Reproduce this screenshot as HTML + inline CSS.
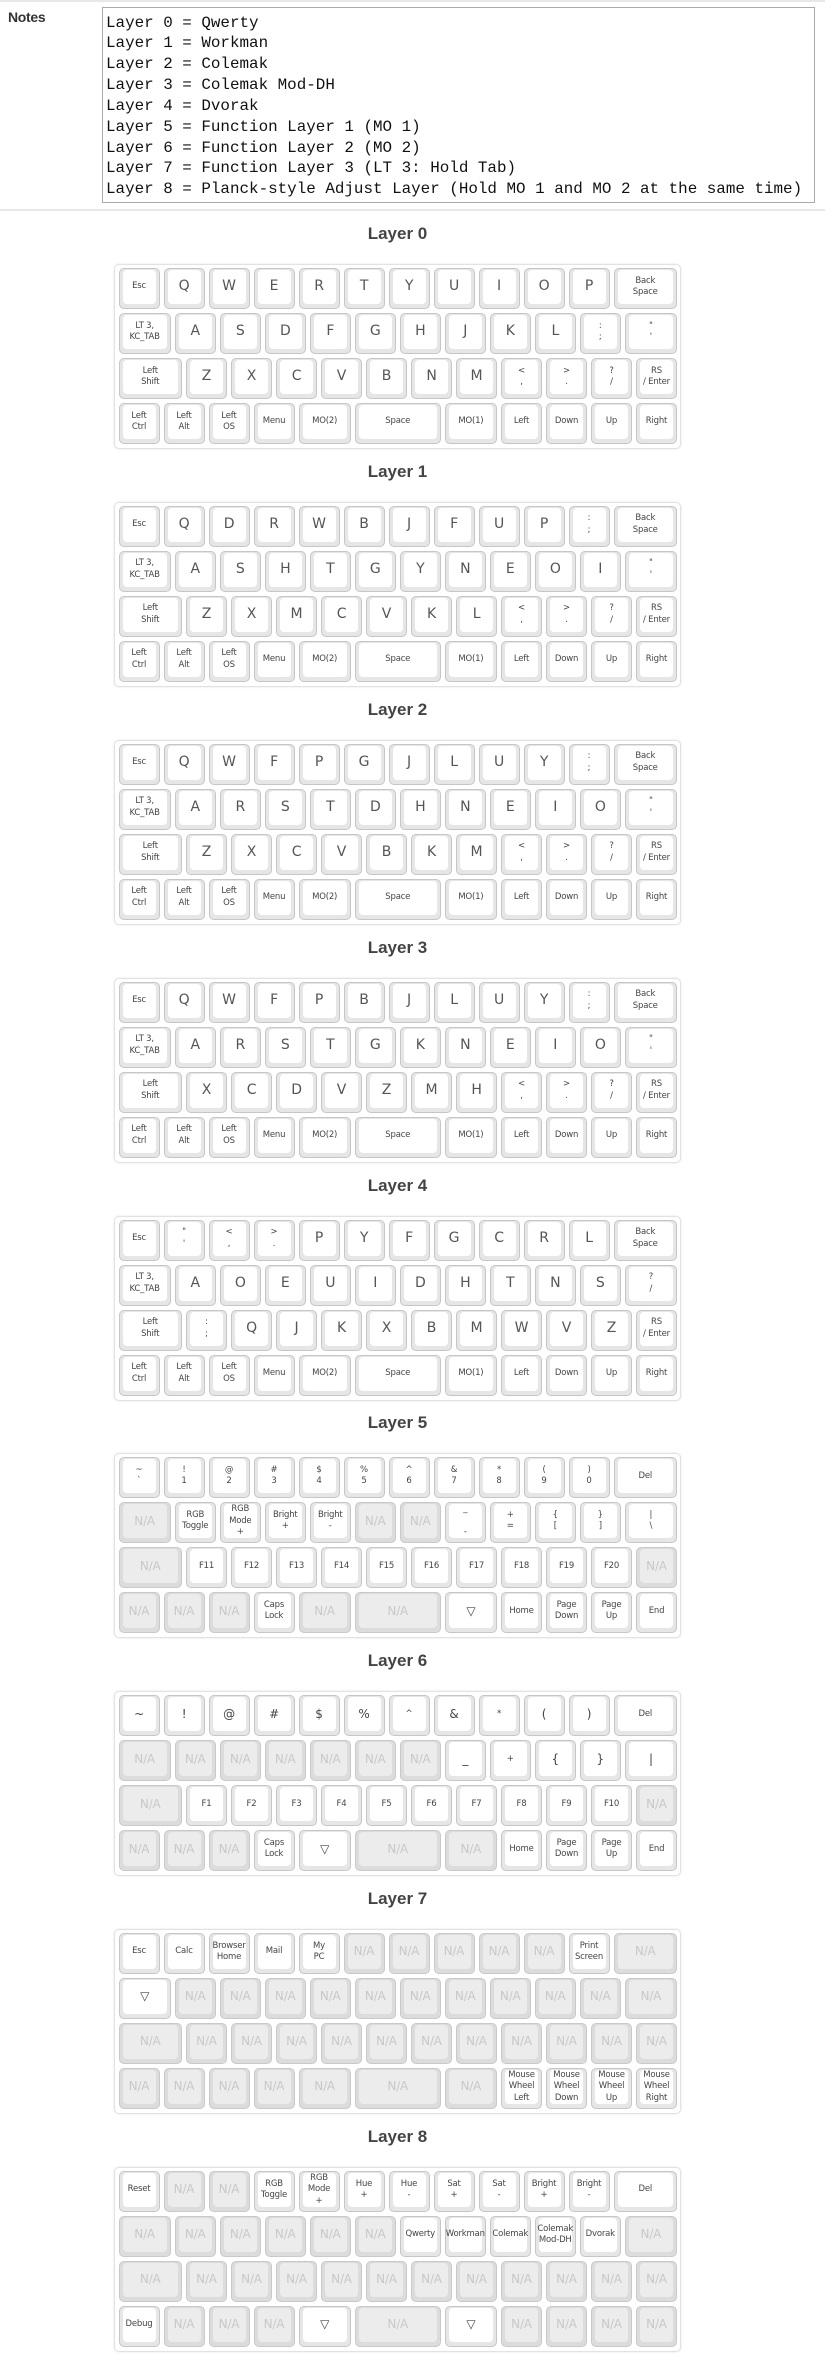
<!DOCTYPE html>
<html><head><meta charset="utf-8"><style>
*{box-sizing:border-box;margin:0;padding:0}
body{width:825px;height:2375px;background:#fff;font-family:"DejaVu Sans","Liberation Sans",sans-serif;position:relative;overflow:hidden;color:#444}
.top{position:absolute;left:0;top:0;width:825px;height:2px;background:#e8e8e8}
.sep{position:absolute;left:0;top:209px;width:825px;height:2px;background:#e8e8e8}
.nl{position:absolute;left:8px;top:9px;font-family:"Liberation Sans",sans-serif;font-weight:bold;font-size:14px;color:#333;letter-spacing:-0.3px}
.ta{position:absolute;left:102px;top:7px;width:713px;height:196px;border:1px solid #aaa;overflow:hidden}
.ta pre{position:absolute;left:3px;top:4.5px;font-family:"Liberation Mono",monospace;font-size:15.9px;line-height:20.85px;color:#111}
.sec{position:absolute;left:0;width:825px;height:238px}
.t{position:absolute;left:114px;width:567px;top:12px;text-align:center;font-family:"Liberation Sans",sans-serif;font-weight:bold;font-size:17px;color:#444}
.kb{position:absolute;left:114px;top:52px;width:567px;height:185px;border:1px solid #e2e2e2;border-radius:5px;box-shadow:0 0 2px rgba(0,0,0,.12);padding:3px 0 0 3.5px}
.r{display:flex;gap:4px;height:41px;margin-bottom:4px}
.k{position:relative;width:41px;height:41px;flex:none;background:#e6e6e6;border:1px solid #c6c6c6;border-radius:5px}
.k span{position:absolute;left:3px;right:3px;top:1px;bottom:4px;background:#fff;border-radius:4px;display:flex;align-items:center;justify-content:center;text-align:center;font-size:8.5px;line-height:11.5px;color:#444;white-space:nowrap;letter-spacing:-0.2px}
.k span.b{font-size:14px;color:#555}
.k span.m{font-size:12px}
.n{background:#dcdcdc;border-color:#c9c9c9}
.n span{background:#ececec;color:#c8c8c8;font-size:12px}
.a{width:52.25px}.c{width:63.5px}.d{width:86px}
</style></head><body>
<div class="top"></div>
<div class="nl">Notes</div>
<div class="ta"><pre>Layer 0 = Qwerty
Layer 1 = Workman
Layer 2 = Colemak
Layer 3 = Colemak Mod-DH
Layer 4 = Dvorak
Layer 5 = Function Layer 1 (MO 1)
Layer 6 = Function Layer 2 (MO 2)
Layer 7 = Function Layer 3 (LT 3: Hold Tab)
Layer 8 = Planck-style Adjust Layer (Hold MO 1 and MO 2 at the same time)</pre></div>
<div class="sep"></div>

<div class="sec" style="top:212px"><div class="t">Layer 0</div><div class="kb">
<div class="r"><div class="k"><span>Esc</span></div><div class="k"><span class="b">Q</span></div><div class="k"><span class="b">W</span></div><div class="k"><span class="b">E</span></div><div class="k"><span class="b">R</span></div><div class="k"><span class="b">T</span></div><div class="k"><span class="b">Y</span></div><div class="k"><span class="b">U</span></div><div class="k"><span class="b">I</span></div><div class="k"><span class="b">O</span></div><div class="k"><span class="b">P</span></div><div class="k c"><span>Back<br>Space</span></div></div>
<div class="r"><div class="k a"><span>LT 3,<br>KC_TAB</span></div><div class="k"><span class="b">A</span></div><div class="k"><span class="b">S</span></div><div class="k"><span class="b">D</span></div><div class="k"><span class="b">F</span></div><div class="k"><span class="b">G</span></div><div class="k"><span class="b">H</span></div><div class="k"><span class="b">J</span></div><div class="k"><span class="b">K</span></div><div class="k"><span class="b">L</span></div><div class="k"><span>:<br>;</span></div><div class="k a"><span>"<br>'</span></div></div>
<div class="r"><div class="k c"><span>Left<br>Shift</span></div><div class="k"><span class="b">Z</span></div><div class="k"><span class="b">X</span></div><div class="k"><span class="b">C</span></div><div class="k"><span class="b">V</span></div><div class="k"><span class="b">B</span></div><div class="k"><span class="b">N</span></div><div class="k"><span class="b">M</span></div><div class="k"><span>&lt;<br>,</span></div><div class="k"><span>&gt;<br>.</span></div><div class="k"><span>?<br>/</span></div><div class="k"><span>RS<br>/ Enter</span></div></div>
<div class="r"><div class="k"><span>Left<br>Ctrl</span></div><div class="k"><span>Left<br>Alt</span></div><div class="k"><span>Left<br>OS</span></div><div class="k"><span>Menu</span></div><div class="k a"><span>MO(2)</span></div><div class="k d"><span>Space</span></div><div class="k a"><span>MO(1)</span></div><div class="k"><span>Left</span></div><div class="k"><span>Down</span></div><div class="k"><span>Up</span></div><div class="k"><span>Right</span></div></div>
</div></div>

<div class="sec" style="top:449.9px"><div class="t">Layer 1</div><div class="kb">
<div class="r"><div class="k"><span>Esc</span></div><div class="k"><span class="b">Q</span></div><div class="k"><span class="b">D</span></div><div class="k"><span class="b">R</span></div><div class="k"><span class="b">W</span></div><div class="k"><span class="b">B</span></div><div class="k"><span class="b">J</span></div><div class="k"><span class="b">F</span></div><div class="k"><span class="b">U</span></div><div class="k"><span class="b">P</span></div><div class="k"><span>:<br>;</span></div><div class="k c"><span>Back<br>Space</span></div></div>
<div class="r"><div class="k a"><span>LT 3,<br>KC_TAB</span></div><div class="k"><span class="b">A</span></div><div class="k"><span class="b">S</span></div><div class="k"><span class="b">H</span></div><div class="k"><span class="b">T</span></div><div class="k"><span class="b">G</span></div><div class="k"><span class="b">Y</span></div><div class="k"><span class="b">N</span></div><div class="k"><span class="b">E</span></div><div class="k"><span class="b">O</span></div><div class="k"><span class="b">I</span></div><div class="k a"><span>"<br>'</span></div></div>
<div class="r"><div class="k c"><span>Left<br>Shift</span></div><div class="k"><span class="b">Z</span></div><div class="k"><span class="b">X</span></div><div class="k"><span class="b">M</span></div><div class="k"><span class="b">C</span></div><div class="k"><span class="b">V</span></div><div class="k"><span class="b">K</span></div><div class="k"><span class="b">L</span></div><div class="k"><span>&lt;<br>,</span></div><div class="k"><span>&gt;<br>.</span></div><div class="k"><span>?<br>/</span></div><div class="k"><span>RS<br>/ Enter</span></div></div>
<div class="r"><div class="k"><span>Left<br>Ctrl</span></div><div class="k"><span>Left<br>Alt</span></div><div class="k"><span>Left<br>OS</span></div><div class="k"><span>Menu</span></div><div class="k a"><span>MO(2)</span></div><div class="k d"><span>Space</span></div><div class="k a"><span>MO(1)</span></div><div class="k"><span>Left</span></div><div class="k"><span>Down</span></div><div class="k"><span>Up</span></div><div class="k"><span>Right</span></div></div>
</div></div>

<div class="sec" style="top:687.75px"><div class="t">Layer 2</div><div class="kb">
<div class="r"><div class="k"><span>Esc</span></div><div class="k"><span class="b">Q</span></div><div class="k"><span class="b">W</span></div><div class="k"><span class="b">F</span></div><div class="k"><span class="b">P</span></div><div class="k"><span class="b">G</span></div><div class="k"><span class="b">J</span></div><div class="k"><span class="b">L</span></div><div class="k"><span class="b">U</span></div><div class="k"><span class="b">Y</span></div><div class="k"><span>:<br>;</span></div><div class="k c"><span>Back<br>Space</span></div></div>
<div class="r"><div class="k a"><span>LT 3,<br>KC_TAB</span></div><div class="k"><span class="b">A</span></div><div class="k"><span class="b">R</span></div><div class="k"><span class="b">S</span></div><div class="k"><span class="b">T</span></div><div class="k"><span class="b">D</span></div><div class="k"><span class="b">H</span></div><div class="k"><span class="b">N</span></div><div class="k"><span class="b">E</span></div><div class="k"><span class="b">I</span></div><div class="k"><span class="b">O</span></div><div class="k a"><span>"<br>'</span></div></div>
<div class="r"><div class="k c"><span>Left<br>Shift</span></div><div class="k"><span class="b">Z</span></div><div class="k"><span class="b">X</span></div><div class="k"><span class="b">C</span></div><div class="k"><span class="b">V</span></div><div class="k"><span class="b">B</span></div><div class="k"><span class="b">K</span></div><div class="k"><span class="b">M</span></div><div class="k"><span>&lt;<br>,</span></div><div class="k"><span>&gt;<br>.</span></div><div class="k"><span>?<br>/</span></div><div class="k"><span>RS<br>/ Enter</span></div></div>
<div class="r"><div class="k"><span>Left<br>Ctrl</span></div><div class="k"><span>Left<br>Alt</span></div><div class="k"><span>Left<br>OS</span></div><div class="k"><span>Menu</span></div><div class="k a"><span>MO(2)</span></div><div class="k d"><span>Space</span></div><div class="k a"><span>MO(1)</span></div><div class="k"><span>Left</span></div><div class="k"><span>Down</span></div><div class="k"><span>Up</span></div><div class="k"><span>Right</span></div></div>
</div></div>

<div class="sec" style="top:925.6px"><div class="t">Layer 3</div><div class="kb">
<div class="r"><div class="k"><span>Esc</span></div><div class="k"><span class="b">Q</span></div><div class="k"><span class="b">W</span></div><div class="k"><span class="b">F</span></div><div class="k"><span class="b">P</span></div><div class="k"><span class="b">B</span></div><div class="k"><span class="b">J</span></div><div class="k"><span class="b">L</span></div><div class="k"><span class="b">U</span></div><div class="k"><span class="b">Y</span></div><div class="k"><span>:<br>;</span></div><div class="k c"><span>Back<br>Space</span></div></div>
<div class="r"><div class="k a"><span>LT 3,<br>KC_TAB</span></div><div class="k"><span class="b">A</span></div><div class="k"><span class="b">R</span></div><div class="k"><span class="b">S</span></div><div class="k"><span class="b">T</span></div><div class="k"><span class="b">G</span></div><div class="k"><span class="b">K</span></div><div class="k"><span class="b">N</span></div><div class="k"><span class="b">E</span></div><div class="k"><span class="b">I</span></div><div class="k"><span class="b">O</span></div><div class="k a"><span>"<br>'</span></div></div>
<div class="r"><div class="k c"><span>Left<br>Shift</span></div><div class="k"><span class="b">X</span></div><div class="k"><span class="b">C</span></div><div class="k"><span class="b">D</span></div><div class="k"><span class="b">V</span></div><div class="k"><span class="b">Z</span></div><div class="k"><span class="b">M</span></div><div class="k"><span class="b">H</span></div><div class="k"><span>&lt;<br>,</span></div><div class="k"><span>&gt;<br>.</span></div><div class="k"><span>?<br>/</span></div><div class="k"><span>RS<br>/ Enter</span></div></div>
<div class="r"><div class="k"><span>Left<br>Ctrl</span></div><div class="k"><span>Left<br>Alt</span></div><div class="k"><span>Left<br>OS</span></div><div class="k"><span>Menu</span></div><div class="k a"><span>MO(2)</span></div><div class="k d"><span>Space</span></div><div class="k a"><span>MO(1)</span></div><div class="k"><span>Left</span></div><div class="k"><span>Down</span></div><div class="k"><span>Up</span></div><div class="k"><span>Right</span></div></div>
</div></div>

<div class="sec" style="top:1163.5px"><div class="t">Layer 4</div><div class="kb">
<div class="r"><div class="k"><span>Esc</span></div><div class="k"><span>"<br>'</span></div><div class="k"><span>&lt;<br>,</span></div><div class="k"><span>&gt;<br>.</span></div><div class="k"><span class="b">P</span></div><div class="k"><span class="b">Y</span></div><div class="k"><span class="b">F</span></div><div class="k"><span class="b">G</span></div><div class="k"><span class="b">C</span></div><div class="k"><span class="b">R</span></div><div class="k"><span class="b">L</span></div><div class="k c"><span>Back<br>Space</span></div></div>
<div class="r"><div class="k a"><span>LT 3,<br>KC_TAB</span></div><div class="k"><span class="b">A</span></div><div class="k"><span class="b">O</span></div><div class="k"><span class="b">E</span></div><div class="k"><span class="b">U</span></div><div class="k"><span class="b">I</span></div><div class="k"><span class="b">D</span></div><div class="k"><span class="b">H</span></div><div class="k"><span class="b">T</span></div><div class="k"><span class="b">N</span></div><div class="k"><span class="b">S</span></div><div class="k a"><span>?<br>/</span></div></div>
<div class="r"><div class="k c"><span>Left<br>Shift</span></div><div class="k"><span>:<br>;</span></div><div class="k"><span class="b">Q</span></div><div class="k"><span class="b">J</span></div><div class="k"><span class="b">K</span></div><div class="k"><span class="b">X</span></div><div class="k"><span class="b">B</span></div><div class="k"><span class="b">M</span></div><div class="k"><span class="b">W</span></div><div class="k"><span class="b">V</span></div><div class="k"><span class="b">Z</span></div><div class="k"><span>RS<br>/ Enter</span></div></div>
<div class="r"><div class="k"><span>Left<br>Ctrl</span></div><div class="k"><span>Left<br>Alt</span></div><div class="k"><span>Left<br>OS</span></div><div class="k"><span>Menu</span></div><div class="k a"><span>MO(2)</span></div><div class="k d"><span>Space</span></div><div class="k a"><span>MO(1)</span></div><div class="k"><span>Left</span></div><div class="k"><span>Down</span></div><div class="k"><span>Up</span></div><div class="k"><span>Right</span></div></div>
</div></div>

<div class="sec" style="top:1401.4px"><div class="t">Layer 5</div><div class="kb">
<div class="r"><div class="k"><span>~<br>`</span></div><div class="k"><span>!<br>1</span></div><div class="k"><span>@<br>2</span></div><div class="k"><span>#<br>3</span></div><div class="k"><span>$<br>4</span></div><div class="k"><span>%<br>5</span></div><div class="k"><span>^<br>6</span></div><div class="k"><span>&amp;<br>7</span></div><div class="k"><span>*<br>8</span></div><div class="k"><span>(<br>9</span></div><div class="k"><span>)<br>0</span></div><div class="k c"><span>Del</span></div></div>
<div class="r"><div class="k a n"><span>N/A</span></div><div class="k"><span>RGB<br>Toggle</span></div><div class="k"><span>RGB<br>Mode<br>+</span></div><div class="k"><span>Bright<br>+</span></div><div class="k"><span>Bright<br>-</span></div><div class="k n"><span>N/A</span></div><div class="k n"><span>N/A</span></div><div class="k"><span>_<br><br>-</span></div><div class="k"><span>+<br>=</span></div><div class="k"><span>{<br>[</span></div><div class="k"><span>}<br>]</span></div><div class="k a"><span>|<br>\</span></div></div>
<div class="r"><div class="k c n"><span>N/A</span></div><div class="k"><span>F11</span></div><div class="k"><span>F12</span></div><div class="k"><span>F13</span></div><div class="k"><span>F14</span></div><div class="k"><span>F15</span></div><div class="k"><span>F16</span></div><div class="k"><span>F17</span></div><div class="k"><span>F18</span></div><div class="k"><span>F19</span></div><div class="k"><span>F20</span></div><div class="k n"><span>N/A</span></div></div>
<div class="r"><div class="k n"><span>N/A</span></div><div class="k n"><span>N/A</span></div><div class="k n"><span>N/A</span></div><div class="k"><span>Caps<br>Lock</span></div><div class="k a n"><span>N/A</span></div><div class="k d n"><span>N/A</span></div><div class="k a"><span class="m">▽</span></div><div class="k"><span>Home</span></div><div class="k"><span>Page<br>Down</span></div><div class="k"><span>Page<br>Up</span></div><div class="k"><span>End</span></div></div>
</div></div>

<div class="sec" style="top:1639.25px"><div class="t">Layer 6</div><div class="kb">
<div class="r"><div class="k"><span class="m">~</span></div><div class="k"><span class="m">!</span></div><div class="k"><span class="m">@</span></div><div class="k"><span class="m">#</span></div><div class="k"><span class="m">$</span></div><div class="k"><span class="m">%</span></div><div class="k"><span>^</span></div><div class="k"><span class="m">&amp;</span></div><div class="k"><span>*</span></div><div class="k"><span class="m">(</span></div><div class="k"><span class="m">)</span></div><div class="k c"><span>Del</span></div></div>
<div class="r"><div class="k a n"><span>N/A</span></div><div class="k n"><span>N/A</span></div><div class="k n"><span>N/A</span></div><div class="k n"><span>N/A</span></div><div class="k n"><span>N/A</span></div><div class="k n"><span>N/A</span></div><div class="k n"><span>N/A</span></div><div class="k"><span class="m">_</span></div><div class="k"><span>+</span></div><div class="k"><span class="m">{</span></div><div class="k"><span class="m">}</span></div><div class="k a"><span class="m">|</span></div></div>
<div class="r"><div class="k c n"><span>N/A</span></div><div class="k"><span>F1</span></div><div class="k"><span>F2</span></div><div class="k"><span>F3</span></div><div class="k"><span>F4</span></div><div class="k"><span>F5</span></div><div class="k"><span>F6</span></div><div class="k"><span>F7</span></div><div class="k"><span>F8</span></div><div class="k"><span>F9</span></div><div class="k"><span>F10</span></div><div class="k n"><span>N/A</span></div></div>
<div class="r"><div class="k n"><span>N/A</span></div><div class="k n"><span>N/A</span></div><div class="k n"><span>N/A</span></div><div class="k"><span>Caps<br>Lock</span></div><div class="k a"><span class="m">▽</span></div><div class="k d n"><span>N/A</span></div><div class="k a n"><span>N/A</span></div><div class="k"><span>Home</span></div><div class="k"><span>Page<br>Down</span></div><div class="k"><span>Page<br>Up</span></div><div class="k"><span>End</span></div></div>
</div></div>

<div class="sec" style="top:1877.1px"><div class="t">Layer 7</div><div class="kb">
<div class="r"><div class="k"><span>Esc</span></div><div class="k"><span>Calc</span></div><div class="k"><span>Browser<br>Home</span></div><div class="k"><span>Mail</span></div><div class="k"><span>My<br>PC</span></div><div class="k n"><span>N/A</span></div><div class="k n"><span>N/A</span></div><div class="k n"><span>N/A</span></div><div class="k n"><span>N/A</span></div><div class="k n"><span>N/A</span></div><div class="k"><span>Print<br>Screen</span></div><div class="k c n"><span>N/A</span></div></div>
<div class="r"><div class="k a"><span class="m">▽</span></div><div class="k n"><span>N/A</span></div><div class="k n"><span>N/A</span></div><div class="k n"><span>N/A</span></div><div class="k n"><span>N/A</span></div><div class="k n"><span>N/A</span></div><div class="k n"><span>N/A</span></div><div class="k n"><span>N/A</span></div><div class="k n"><span>N/A</span></div><div class="k n"><span>N/A</span></div><div class="k n"><span>N/A</span></div><div class="k a n"><span>N/A</span></div></div>
<div class="r"><div class="k c n"><span>N/A</span></div><div class="k n"><span>N/A</span></div><div class="k n"><span>N/A</span></div><div class="k n"><span>N/A</span></div><div class="k n"><span>N/A</span></div><div class="k n"><span>N/A</span></div><div class="k n"><span>N/A</span></div><div class="k n"><span>N/A</span></div><div class="k n"><span>N/A</span></div><div class="k n"><span>N/A</span></div><div class="k n"><span>N/A</span></div><div class="k n"><span>N/A</span></div></div>
<div class="r"><div class="k n"><span>N/A</span></div><div class="k n"><span>N/A</span></div><div class="k n"><span>N/A</span></div><div class="k n"><span>N/A</span></div><div class="k a n"><span>N/A</span></div><div class="k d n"><span>N/A</span></div><div class="k a n"><span>N/A</span></div><div class="k"><span>Mouse<br>Wheel<br>Left</span></div><div class="k"><span>Mouse<br>Wheel<br>Down</span></div><div class="k"><span>Mouse<br>Wheel<br>Up</span></div><div class="k"><span>Mouse<br>Wheel<br>Right</span></div></div>
</div></div>

<div class="sec" style="top:2115px"><div class="t">Layer 8</div><div class="kb">
<div class="r"><div class="k"><span>Reset</span></div><div class="k n"><span>N/A</span></div><div class="k n"><span>N/A</span></div><div class="k"><span>RGB<br>Toggle</span></div><div class="k"><span>RGB<br>Mode<br>+</span></div><div class="k"><span>Hue<br>+</span></div><div class="k"><span>Hue<br>-</span></div><div class="k"><span>Sat<br>+</span></div><div class="k"><span>Sat<br>-</span></div><div class="k"><span>Bright<br>+</span></div><div class="k"><span>Bright<br>-</span></div><div class="k c"><span>Del</span></div></div>
<div class="r"><div class="k a n"><span>N/A</span></div><div class="k n"><span>N/A</span></div><div class="k n"><span>N/A</span></div><div class="k n"><span>N/A</span></div><div class="k n"><span>N/A</span></div><div class="k n"><span>N/A</span></div><div class="k"><span>Qwerty</span></div><div class="k"><span>Workman</span></div><div class="k"><span>Colemak</span></div><div class="k"><span>Colemak<br>Mod-DH</span></div><div class="k"><span>Dvorak</span></div><div class="k a n"><span>N/A</span></div></div>
<div class="r"><div class="k c n"><span>N/A</span></div><div class="k n"><span>N/A</span></div><div class="k n"><span>N/A</span></div><div class="k n"><span>N/A</span></div><div class="k n"><span>N/A</span></div><div class="k n"><span>N/A</span></div><div class="k n"><span>N/A</span></div><div class="k n"><span>N/A</span></div><div class="k n"><span>N/A</span></div><div class="k n"><span>N/A</span></div><div class="k n"><span>N/A</span></div><div class="k n"><span>N/A</span></div></div>
<div class="r"><div class="k"><span>Debug</span></div><div class="k n"><span>N/A</span></div><div class="k n"><span>N/A</span></div><div class="k n"><span>N/A</span></div><div class="k a"><span class="m">▽</span></div><div class="k d n"><span>N/A</span></div><div class="k a"><span class="m">▽</span></div><div class="k n"><span>N/A</span></div><div class="k n"><span>N/A</span></div><div class="k n"><span>N/A</span></div><div class="k n"><span>N/A</span></div></div>
</div></div>
</body></html>
